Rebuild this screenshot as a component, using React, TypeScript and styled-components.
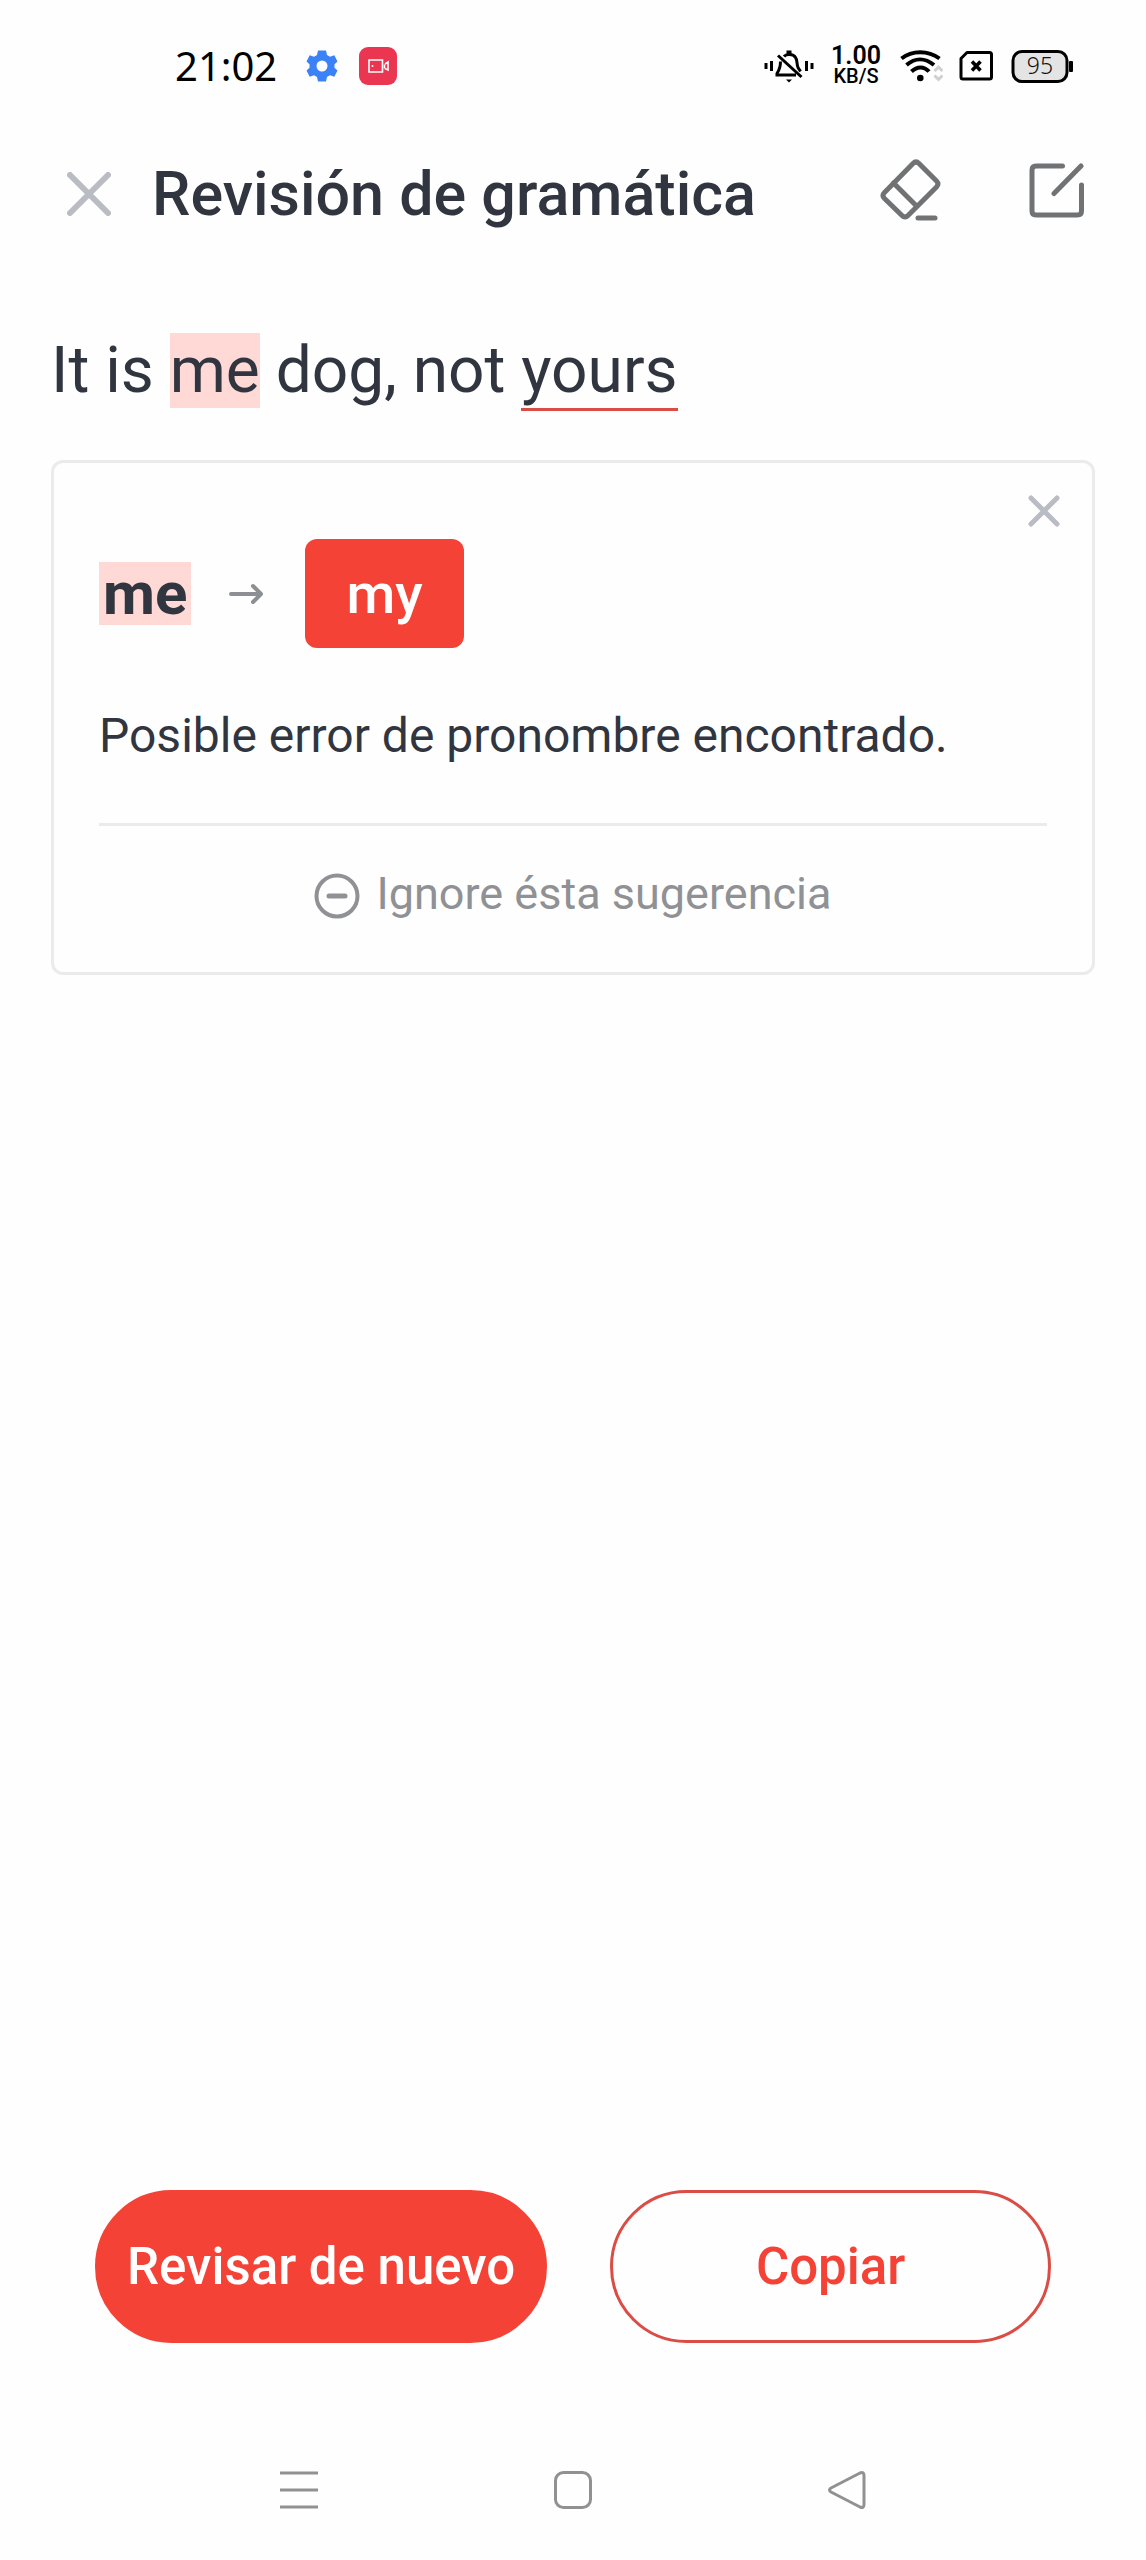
import React from "react";
import styled, { createGlobalStyle } from "styled-components";

const color = {
  page: "#fefefe",
  ink: "#31353f",
  muted: "#8f9194",
  faint: "#b9bcc3",
  tool: "#707274",
  line: "#ebebeb",
  red: "#f44336",
  redLine: "#db4c44",
  blush: "#ffd9d6",
};

const GlobalStyle = createGlobalStyle`
  *, *::before, *::after { box-sizing: border-box; }
  body { margin: 0; background: ${color.page}; }
  button { margin: 0; padding: 0; border: 0; background: none; font: inherit; color: inherit; cursor: pointer; }
  svg { display: block; flex: none; }
`;

const Screen = styled.div`
  display: flex;
  flex-direction: column;
  min-height: 100vh;
  background: ${color.page};
  color: ${color.ink};
  font-family: Roboto, "Noto Sans", sans-serif;
`;

const StatusBar = styled.div`
  display: flex;
  align-items: center;
  justify-content: space-between;
  height: 132px;
  padding: 0 73px 0 175px;
  color: #000;
  font-family: "Noto Sans", Roboto, sans-serif;
`;

const StatusGroup = styled.div<{ $gap: number }>`
  display: flex;
  align-items: center;
  gap: ${(p) => p.$gap}px;
`;

const Clock = styled.time`
  margin-right: 8px;
  font-size: 40px;
  line-height: 48px;
`;

const Speed = styled.div`
  display: flex;
  flex-direction: column;
  align-items: center;
  width: 52px;
  font-family: Roboto, sans-serif;
  font-size: 25px;
  line-height: 20px;
  font-weight: 600;
`;

const SpeedUnit = styled.span`
  font-size: 20px;
  font-weight: 500;
`;

const Header = styled.header`
  display: flex;
  align-items: center;
  height: 124px;
  padding: 0 62px 0 67px;
`;

const Title = styled.h1`
  flex: 1;
  margin: 0 0 0 41px;
  font-size: 61px;
  line-height: 72px;
  font-weight: 500;
`;

const Tools = styled.div`
  display: flex;
  align-items: center;
  gap: 88px;
  padding-bottom: 8px;
`;

const Main = styled.main`
  flex: 1;
  padding: 77px 51px 0;
`;

const Sentence = styled.p`
  margin: 0 0 52px;
  font-size: 64px;
  line-height: 75px;
`;

const Marked = styled.mark`
  background: ${color.blush};
  color: inherit;
`;

const Flagged = styled.span`
  border-bottom: 3px solid ${color.redLine};
`;

const Card = styled.section`
  position: relative;
  padding: 76px 45px 0;
  border: 3px solid ${color.line};
  border-radius: 12px;
`;

const Dismiss = styled.button`
  position: absolute;
  top: 32px;
  right: 32px;
`;

const Correction = styled.div`
  display: flex;
  align-items: center;
`;

const Original = styled(Marked)`
  padding: 0 4px;
  font-size: 60px;
  line-height: 63px;
  font-weight: 700;
`;

const ArrowSlot = styled.span`
  margin: 0 41px 0 38px;
`;

const Replacement = styled.button`
  height: 109px;
  padding: 0 41px;
  border-radius: 12px;
  background: ${color.red};
  color: #fff;
  font-size: 56px;
  line-height: 64px;
  font-weight: 500;
`;

const Explanation = styled.p`
  margin: 0;
  padding: 60px 0 59px;
  border-bottom: 3px solid ${color.line};
  font-size: 48px;
  line-height: 56px;
`;

const Ignore = styled.button`
  display: flex;
  align-items: center;
  justify-content: center;
  gap: 16px;
  width: 100%;
  height: 146px;
  padding-bottom: 10px;
  color: ${color.muted};
  font-size: 45px;
  line-height: 52px;
`;

const IgnoreIcon = styled.svg`
  margin-top: 4px;
`;

const Actions = styled.footer`
  display: flex;
  gap: 63px;
  padding: 0 95px;
`;

const Action = styled.button<{ $primary?: boolean }>`
  flex: ${(p) => (p.$primary ? "none" : "1")};
  height: 153px;
  padding: 0 29px;
  border: 3px solid ${(p) => (p.$primary ? color.red : color.redLine)};
  border-radius: 77px;
  background: ${(p) => (p.$primary ? color.red : "transparent")};
  color: ${(p) => (p.$primary ? "#fff" : color.red)};
  font-size: 51px;
  line-height: 60px;
  font-weight: 500;
`;

const SystemNav = styled.nav`
  display: flex;
  align-items: center;
  justify-content: center;
  gap: 236px;
  height: 140px;
  margin-top: 77px;
`;

const Cross = ({ size, width }: { size: number; width: number }) => (
  <svg width={size} height={size} viewBox={`0 0 ${size} ${size}`} fill="none" stroke={color.faint} strokeWidth={width} strokeLinecap="round">
    <path d={`M3 3L${size - 3} ${size - 3}M${size - 3} 3L3 ${size - 3}`} />
  </svg>
);

const Gear = () => (
  <svg width="32" height="32" viewBox="0 0 32 32" fill="#3b82f6">
    <path
      fillRule="evenodd"
      d="M12 0.5h8l1 4.5 3 1.7 4.3-1.5 3.2 6.3-3 2.8v3.4l3 2.8-3.2 6.3-4.3-1.5-3 1.7-1 4.5h-8l-1-4.5-3-1.7-4.3 1.5L0.500 20.500l3-2.800v-3.400l-3-2.800 3.200-6.300 4.300 1.500 3-1.700zM16 10.500a5.500 5.500 0 1 0 0 11 5.500 5.500 0 0 0 0-11z"
    />
  </svg>
);

const Recorder = () => (
  <svg width="38" height="38" viewBox="0 0 38 38" fill="none" stroke="#fff" strokeWidth="1.600">
    <rect width="38" height="38" rx="9" fill="#ea3650" stroke="none" />
    <path d="M10 13h13.500v12H10z" />
    <path d="M25.500 17.500v4M26 21.500l3 1.500V15l-3 2" />
    <circle cx="13.500" cy="19" r="1" fill="#fff" stroke="none" />
  </svg>
);

const SilentBell = () => (
  <svg width="50" height="34" viewBox="0 0 50 34" fill="none" stroke="#000" strokeWidth="3">
    <path d="M2 14v6M7.500 12v10M42.500 12v10M48 14v6" />
    <path d="M20 7.500C22 5 29 4.500 31.500 8.500C33.500 11 32.500 15 34 18.500L36.500 22.500" />
    <path d="M14 6.500L37.500 28M16.500 12.500C16.500 18 16 20 13 24.500V26H32" />
    <path d="M22.500 3.500h5" strokeWidth="4" />
    <path d="M22 30.500h6l-3 3z" fill="#000" stroke="none" />
  </svg>
);

const Wifi = () => (
  <svg width="45" height="34" viewBox="0 0 45 34" fill="none" stroke="#000" strokeWidth="4">
    <path d="M3.500 9.500C14 1 30 1 41.500 9.500" />
    <path d="M8.500 16C17 8.500 27 8.500 36 16" />
    <path d="M13.500 22.500C19 17 26 17 31 22.500" />
    <circle cx="22.300" cy="29" r="3.300" fill="#000" stroke="none" />
    <path d="M36.500 22L40.500 18l4 4M36.500 26.500l4 4 4-4" stroke="#cfcfcf" strokeWidth="3" />
  </svg>
);

const NoSim = () => (
  <svg width="35" height="34" viewBox="0 0 35 34" fill="none" stroke="#000" strokeWidth="3">
    <path d="M8 3.500H30.500q2 0 2 2V28q0 2-2 2H4q-2 0-2-2V9.500z" strokeLinejoin="round" />
    <path d="M13 12.500l8.500 9M21.500 12.500l-8.500 9" strokeWidth="3.500" />
  </svg>
);

const Battery = () => (
  <svg width="63" height="34" viewBox="0 0 63 34">
    <rect x="3" y="2.500" width="54" height="30" rx="9" fill="#e4e4e4" stroke="#000" strokeWidth="3" />
    <rect x="59" y="12" width="4" height="11" rx="1" fill="#000" />
    <text x="30" y="25" fontSize="23" fontWeight="300" textAnchor="middle" fill="#111">
      95
    </text>
  </svg>
);

const Eraser = () => (
  <svg width="61" height="62" viewBox="0 0 61 62" fill="none" stroke={color.tool} strokeWidth="5" strokeLinecap="round" strokeLinejoin="round">
    <path d="M33 4.500Q36 1.500 39 4.500L56.500 22Q59.500 25 56.500 28L28 56.500Q25 59.500 22 56.500L4.500 39.500Q1.500 36.500 4.500 33.500z" />
    <path d="M13.500 24L36.500 47M38 59H55" />
  </svg>
);

const Compose = () => (
  <svg width="55" height="55" viewBox="0 0 55 55" fill="none" stroke={color.tool} strokeWidth="5" strokeLinecap="round">
    <path d="M33.500 3H7Q3 3 3 7V48Q3 52 7 52H48.500Q52.500 52 52.500 48V22" />
    <path d="M25 30.500L52 3" />
  </svg>
);

const Arrow = () => (
  <svg width="35" height="22" viewBox="0 0 35 22" fill="none" stroke="#8c8f93" strokeWidth="4" strokeLinecap="round" strokeLinejoin="round">
    <path d="M2 11H32M24 3l8 8L24 19" />
  </svg>
);

const navIcon = { width: 38, height: 38, viewBox: "0 0 38 38", fill: "none", stroke: "#919191", strokeWidth: 3 };

export default function App() {
  return (
    <Screen>
      <GlobalStyle />
      <StatusBar>
        <StatusGroup $gap={21}>
          <Clock>21:02</Clock>
          <Gear />
          <Recorder />
        </StatusGroup>
        <StatusGroup $gap={16}>
          <SilentBell />
          <Speed>
            <span>1.00</span>
            <SpeedUnit>KB/S</SpeedUnit>
          </Speed>
          <Wifi />
          <NoSim />
          <Battery />
        </StatusGroup>
      </StatusBar>

      <Header>
        <button type="button" aria-label="Cerrar">
          <Cross size={44} width={6} />
        </button>
        <Title>Revisión de gramática</Title>
        <Tools>
          <button type="button" aria-label="Borrar">
            <Eraser />
          </button>
          <button type="button" aria-label="Editar">
            <Compose />
          </button>
        </Tools>
      </Header>

      <Main>
        <Sentence>
          It is <Marked>me</Marked> dog, not <Flagged>yours</Flagged>
        </Sentence>
        <Card>
          <Dismiss type="button" aria-label="Descartar">
            <Cross size={32} width={5} />
          </Dismiss>
          <Correction>
            <Original>me</Original>
            <ArrowSlot>
              <Arrow />
            </ArrowSlot>
            <Replacement type="button">my</Replacement>
          </Correction>
          <Explanation>Posible error de pronombre encontrado.</Explanation>
          <Ignore type="button">
            <IgnoreIcon width="46" height="46" viewBox="0 0 46 46" fill="none" stroke={color.muted} strokeWidth="4">
              <circle cx="23" cy="23" r="20.500" />
              <path d="M15 23H31" strokeWidth="5" strokeLinecap="round" />
            </IgnoreIcon>
            Ignore ésta sugerencia
          </Ignore>
        </Card>
      </Main>

      <Actions>
        <Action type="button" $primary>
          Revisar de nuevo
        </Action>
        <Action type="button">Copiar</Action>
      </Actions>

      <SystemNav>
        <button type="button" aria-label="Recientes">
          <svg {...navIcon}>
            <path d="M0 2H38M0 19H38M0 36H38" />
          </svg>
        </button>
        <button type="button" aria-label="Inicio">
          <svg {...navIcon}>
            <rect x="1.500" y="1.500" width="35" height="35" rx="8" />
          </svg>
        </button>
        <button type="button" aria-label="Atrás">
          <svg {...navIcon} strokeLinejoin="round">
            <path d="M32 2Q36 0.500 36 4.500V33.500Q36 37.500 32 36L3 21Q0 19 3 17z" />
          </svg>
        </button>
      </SystemNav>
    </Screen>
  );
}
